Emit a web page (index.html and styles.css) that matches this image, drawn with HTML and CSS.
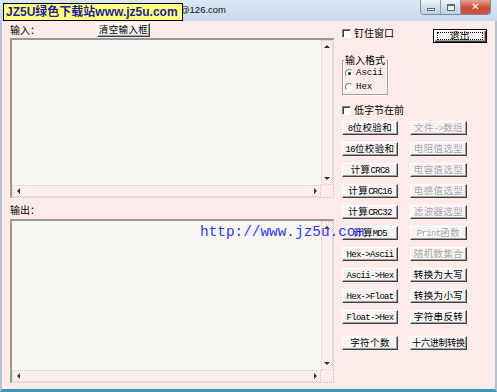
FILE: index.html
```html
<!DOCTYPE html>
<html lang="zh-CN">
<head>
<meta charset="UTF-8" />
<title>工具集合</title>
<link rel="stylesheet" href="styles.css">
</head>
<body>
  <div class="window">
    <div class="titlebar">
      <span class="title">串口调试工具集合V1.0 amo73@126.com</span>
      <div class="caption">
        <span class="cap cap-min"><i></i></span>
        <span class="cap cap-max"><i></i></span>
        <span class="cap cap-close">✕</span>
      </div>
      <div class="banner">JZ5U绿色下载站www.jz5u.com</div>
    </div>

    <div class="client">
      <div class="left">
        <div class="head-row">
          <span class="lbl">输入：</span>
          <button class="btn clear">清空输入框</button>
        </div>
        <div class="textbox tb-in">
          <div class="tb-area"></div>
          <div class="vscroll"><span class="arr up"></span><span class="arr down"></span></div>
          <div class="hscroll"><span class="arr lt"></span><span class="arr rt"></span></div>
          <div class="corner"></div>
        </div>
        <div class="head-row out">
          <span class="lbl">输出：</span>
        </div>
        <div class="textbox tb-out">
          <div class="tb-area"></div>
          <div class="vscroll"><span class="arr up"></span><span class="arr down"></span></div>
          <div class="hscroll"><span class="arr lt"></span><span class="arr rt"></span></div>
          <div class="corner"></div>
        </div>
      </div>

      <div class="right">
        <div class="top-row">
          <label class="check"><span class="box"></span>钉住窗口</label>
          <button class="btn exit">退出</button>
        </div>

        <fieldset class="group">
          <legend>输入格式</legend>
          <label class="radio"><span class="dot on"></span><span class="en">Ascii</span></label>
          <label class="radio"><span class="dot"></span><span class="en">Hex</span></label>
        </fieldset>

        <label class="check low"><span class="box"></span>低字节在前</label>

        <div class="btn-grid">
          <button class="btn"><span class="en">8</span>位校验和</button>
          <button class="btn" disabled>文件<span class="en">-&gt;</span>数组</button>
          <button class="btn"><span class="en">16</span>位校验和</button>
          <button class="btn" disabled>电阻值选型</button>
          <button class="btn">计算<span class="en">CRC8</span></button>
          <button class="btn" disabled>电容值选型</button>
          <button class="btn">计算<span class="en">CRC16</span></button>
          <button class="btn" disabled>电感值选型</button>
          <button class="btn">计算<span class="en">CRC32</span></button>
          <button class="btn" disabled>滤波器选型</button>
          <button class="btn">计算<span class="en">MD5</span></button>
          <button class="btn" disabled><span class="en">Print</span>函数</button>
          <button class="btn"><span class="en">Hex-&gt;Ascii</span></button>
          <button class="btn" disabled>随机数集合</button>
          <button class="btn"><span class="en">Ascii-&gt;Hex</span></button>
          <button class="btn">转换为大写</button>
          <button class="btn"><span class="en">Hex-&gt;Float</span></button>
          <button class="btn">转换为小写</button>
          <button class="btn"><span class="en">Float-&gt;Hex</span></button>
          <button class="btn">字符串反转</button>
          <button class="btn last">字符个数</button>
          <button class="btn last tight">十六进制转换</button>
        </div>
      </div>
    </div>

    <div class="watermark">http://www.jz5u.com</div>
  </div>
</body>
</html>
```

FILE: styles.css
```css
/* dasar */
* {
  box-sizing: border-box;
}
body {
  margin: 0;
  background: #fff;
  font-family: "Noto Sans CJK SC", "Liberation Sans", sans-serif;
  color: #000;
}
.window {
  width: 497px;
  height: 392px;
  display: flex;
  flex-direction: column;
  position: relative;
  overflow: hidden;
}

/* title bar */
.titlebar {
  height: 21px;
  flex: none;
  display: flex;
  align-items: flex-start;
  position: relative;
  background: linear-gradient(#dbe7f4, #c8d9ee);
}
.title {
  width: 226px;
  text-align: right;
  white-space: nowrap;
  overflow: hidden;
  font: 9.5px/20px "Liberation Sans", "Noto Sans CJK SC", sans-serif;
  color: #111;
}
.caption {
  margin-left: auto;
  margin-right: 6px;
  display: flex;
  border: 1px solid #7b8ca2;
  border-top: none;
  border-radius: 0 0 4px 4px;
  overflow: hidden;
}
.cap {
  height: 14px;
  display: flex;
  align-items: center;
  justify-content: center;
}
.cap-min, .cap-max {
  width: 20px;
  background: linear-gradient(#eef3f9, #cfdbe9 55%, #c2d1e3);
  border-right: 1px solid #8d9cb0;
}
.cap-min i {
  width: 8px;
  height: 3px;
  margin-top: 5px;
  background: #fff;
  border: 1px solid #58677a;
}
.cap-max i {
  width: 8px;
  height: 7px;
  border: 1px solid #58677a;
  border-top-width: 2px;
  background: #e8eef6;
}
.cap-close {
  width: 29px;
  background: linear-gradient(#e7a595, #cc4a35 55%, #c9553f);
  color: #fff;
  font: bold 10px/14px "DejaVu Sans", sans-serif;
}
.banner {
  position: absolute;
  left: 3px;
  top: 3px;
  width: 180px;
  height: 18px;
  background: #ffff80;
  border: 1px solid #000;
  color: #1e1e9a;
  font: bold 12px/16px "Liberation Sans", "Noto Sans CJK SC", sans-serif;
  padding-left: 2px;
  white-space: nowrap;
  overflow: hidden;
}

/* client area */
.client {
  flex: 1;
  display: flex;
  gap: 8px;
  padding: 0 4px 0 8px;
  background: #fcebe8;
  border-left: 2px solid #b4c3d4;
  border-right: 2px solid #b4c3d4;
  border-bottom: 3px solid #3f98b1;
  font-size: 10px;
}
.left {
  width: 324px;
  display: flex;
  flex-direction: column;
}
.head-row {
  height: 17px;
  display: flex;
  align-items: flex-start;
}
.head-row.out {
  height: 21px;
}
.lbl {
  width: 87px;
  margin-top: 2px;
  line-height: 14px;
}
.out .lbl {
  margin-top: 5px;
}
.en {
  font-family: "Liberation Mono", monospace;
  font-size: 9px;
}

/* text box with scroll bars */
.textbox {
  display: grid;
  grid-template-columns: 1fr 12px;
  grid-template-rows: 1fr 12px;
  border-top: 2px solid #999;
  border-left: 2px solid #999;
  border-right: 1px dotted #cdbfbf;
  border-bottom: 1px dotted #cdbfbf;
}
.tb-in {
  height: 160px;
}
.tb-out {
  height: 164px;
}
.tb-area {
  background: #f6f7f3;
}
.vscroll, .hscroll {
  position: relative;
  background: #fbeeec;
  border: 1px dotted #d2c8c8;
}
.corner {
  background: #fcebe8;
}
.arr {
  position: absolute;
  width: 0;
  height: 0;
  border: 3px solid transparent;
}
.arr.up {
  top: 4px;
  left: 2px;
  border-bottom-color: #333;
  border-top-width: 0;
}
.arr.down {
  bottom: 4px;
  left: 2px;
  border-top-color: #333;
  border-bottom-width: 0;
}
.arr.lt {
  left: 4px;
  top: 2px;
  border-right-color: #333;
  border-left-width: 0;
}
.arr.rt {
  right: 3px;
  top: 2px;
  border-left-color: #333;
  border-right-width: 0;
}

/* right panel */
.right {
  width: 149px;
  display: flex;
  flex-direction: column;
  align-items: flex-start;
}
.top-row {
  width: 100%;
  display: flex;
  align-items: flex-start;
  margin-top: 6px;
}
.check {
  display: flex;
  align-items: center;
  gap: 3px;
  line-height: 12px;
}
.box {
  width: 9px;
  height: 9px;
  background: #fff;
  border: 1px solid;
  border-color: #808080 #fff #fff #808080;
  box-shadow: inset 1px 1px #404040;
}
.check.low {
  margin-top: 9px;
}
.btn {
  display: block;
  height: 14px;
  padding: 0 0 1px;
  text-align: center;
  background: #f6f3f3;
  border: 1px solid;
  border-color: #fff #404040 #404040 #fff;
  box-shadow: inset -1px -1px #a0a0a0;
  font: 9.5px/11px "Noto Sans CJK SC", sans-serif;
  letter-spacing: 0.4px;
  color: #000;
  white-space: nowrap;
  overflow: hidden;
}
.btn .en {
  letter-spacing: -0.7px;
}
.btn.tight {
  font-size: 9px;
  letter-spacing: -0.2px;
}
.btn:disabled {
  color: #a9a5a5;
  text-shadow: 1px 1px #fff;
}
.btn.clear {
  width: 53px;
  margin-top: 2px;
}
.btn.exit {
  position: relative;
  width: 54px;
  margin: 2px 4px 0 auto;
  border: 1px solid #000;
  box-shadow: inset 1px 1px #fff, inset -1px -1px #404040, inset -2px -2px #a0a0a0;
}
.btn.exit::after {
  content: "";
  position: absolute;
  inset: 2px 3px;
  border: 1px dotted #000;
}
.group {
  width: 46px;
  margin: 11px 0 0 0;
  padding: 0 0 0 2px;
  border: 1px solid #a0a0a0;
  box-shadow: 1px 1px #fff, inset 1px 1px #fff;
}
.group legend {
  padding: 0 1px;
  margin-left: -1px;
  line-height: 12px;
  white-space: nowrap;
}
.radio {
  display: flex;
  align-items: center;
  gap: 3px;
  height: 14px;
}
.dot {
  width: 8px;
  height: 8px;
  border-radius: 50%;
  background: #fff;
  border: 1px solid;
  border-color: #808080 #fff #fff #808080;
  display: flex;
  align-items: center;
  justify-content: center;
}
.dot.on::after {
  content: "";
  width: 3px;
  height: 3px;
  border-radius: 50%;
  background: #000;
}
.btn-grid {
  margin-top: 5px;
  display: grid;
  grid-template-columns: 56px 57px;
  grid-auto-rows: 14px;
  column-gap: 12px;
  row-gap: 7px;
}
.btn.last {
  margin-top: 5px;
}

/* watermark over the page */
.watermark {
  position: absolute;
  left: 200px;
  top: 225px;
  font: 14.4px/15px "Liberation Mono", monospace;
  color: #3434f2;
  white-space: nowrap;
}
```
